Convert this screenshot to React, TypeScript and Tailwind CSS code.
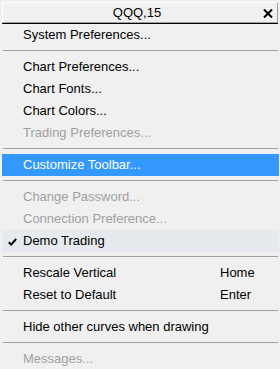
import React from 'react';

type Item =
    | { kind: 'sep' }
    | { kind: 'item'; label: string; disabled?: boolean; active?: boolean; checked?: boolean; tinted?: boolean; shortcut?: string };

const items: Item[] = [
    { kind: 'item', label: 'System Preferences...' },
    { kind: 'sep' },
    { kind: 'item', label: 'Chart Preferences...' },
    { kind: 'item', label: 'Chart Fonts...' },
    { kind: 'item', label: 'Chart Colors...' },
    { kind: 'item', label: 'Trading Preferences...', disabled: true },
    { kind: 'sep' },
    { kind: 'item', label: 'Customize Toolbar...', active: true },
    { kind: 'sep' },
    { kind: 'item', label: 'Change Password...', disabled: true },
    { kind: 'item', label: 'Connection Preference...', disabled: true },
    { kind: 'item', label: 'Demo Trading', checked: true, tinted: true },
    { kind: 'sep' },
    { kind: 'item', label: 'Rescale Vertical', shortcut: 'Home' },
    { kind: 'item', label: 'Reset to Default', shortcut: 'Enter' },
    { kind: 'sep' },
    { kind: 'item', label: 'Hide other curves when drawing' },
    { kind: 'sep' },
    { kind: 'item', label: 'Messages...', disabled: true },
];

const Check: React.FC = () => (
    <svg width="9" height="8" viewBox="0 0 9 8" className="absolute left-[6px] top-[8px]">
        <path d="M0.8 4.2 L3.2 6.6 L8.2 0.8" fill="none" stroke="#000" strokeWidth="2" />
    </svg>
);

const App: React.FC = () => {
    return (
        <div
            className="w-[280px] h-[369px] bg-[#f0f0f0] pt-[2px] overflow-hidden text-[13px] text-black"
            style={{ fontFamily: '"Liberation Sans", Arial, sans-serif' }}
        >
            {/* Title bar */}
            <div className="ml-[2px] w-[276px] h-[22px] border-b border-black">
                <div className="relative h-[21px] border-t border-l border-white border-b border-r border-b-[#a0a0a0] border-r-[#a0a0a0] flex items-center justify-center pr-[6px]">
                    <span className="leading-none">QQQ,15</span>
                    <svg width="10" height="9" viewBox="0 0 10 9" className="absolute right-[4px] top-[6px]">
                        <path d="M1 0.5 L9 8.5 M9 0.5 L1 8.5" stroke="#000" strokeWidth="2" />
                    </svg>
                </div>
            </div>

            {items.map((it, i) =>
                it.kind === 'sep' ? (
                    <div key={i} className="h-[10px] pt-[4px]">
                        <div className="ml-[3px] w-[275px] h-px bg-[#a0a0a0]" />
                    </div>
                ) : (
                    <div
                        key={i}
                        className={`relative ml-[2px] w-[277px] h-[22px] flex items-center pl-[21px] ${
                            it.active ? 'bg-[#3399ff] text-white' : it.tinted ? 'bg-[#e6e9ee]' : ''
                        } ${it.disabled ? 'text-[#a0a0a0]' : ''}`}
                    >
                        {it.checked && <Check />}
                        <span className="w-[197px] whitespace-nowrap">{it.label}</span>
                        {it.shortcut && <span>{it.shortcut}</span>}
                    </div>
                )
            )}
        </div>
    );
};

export default App;
